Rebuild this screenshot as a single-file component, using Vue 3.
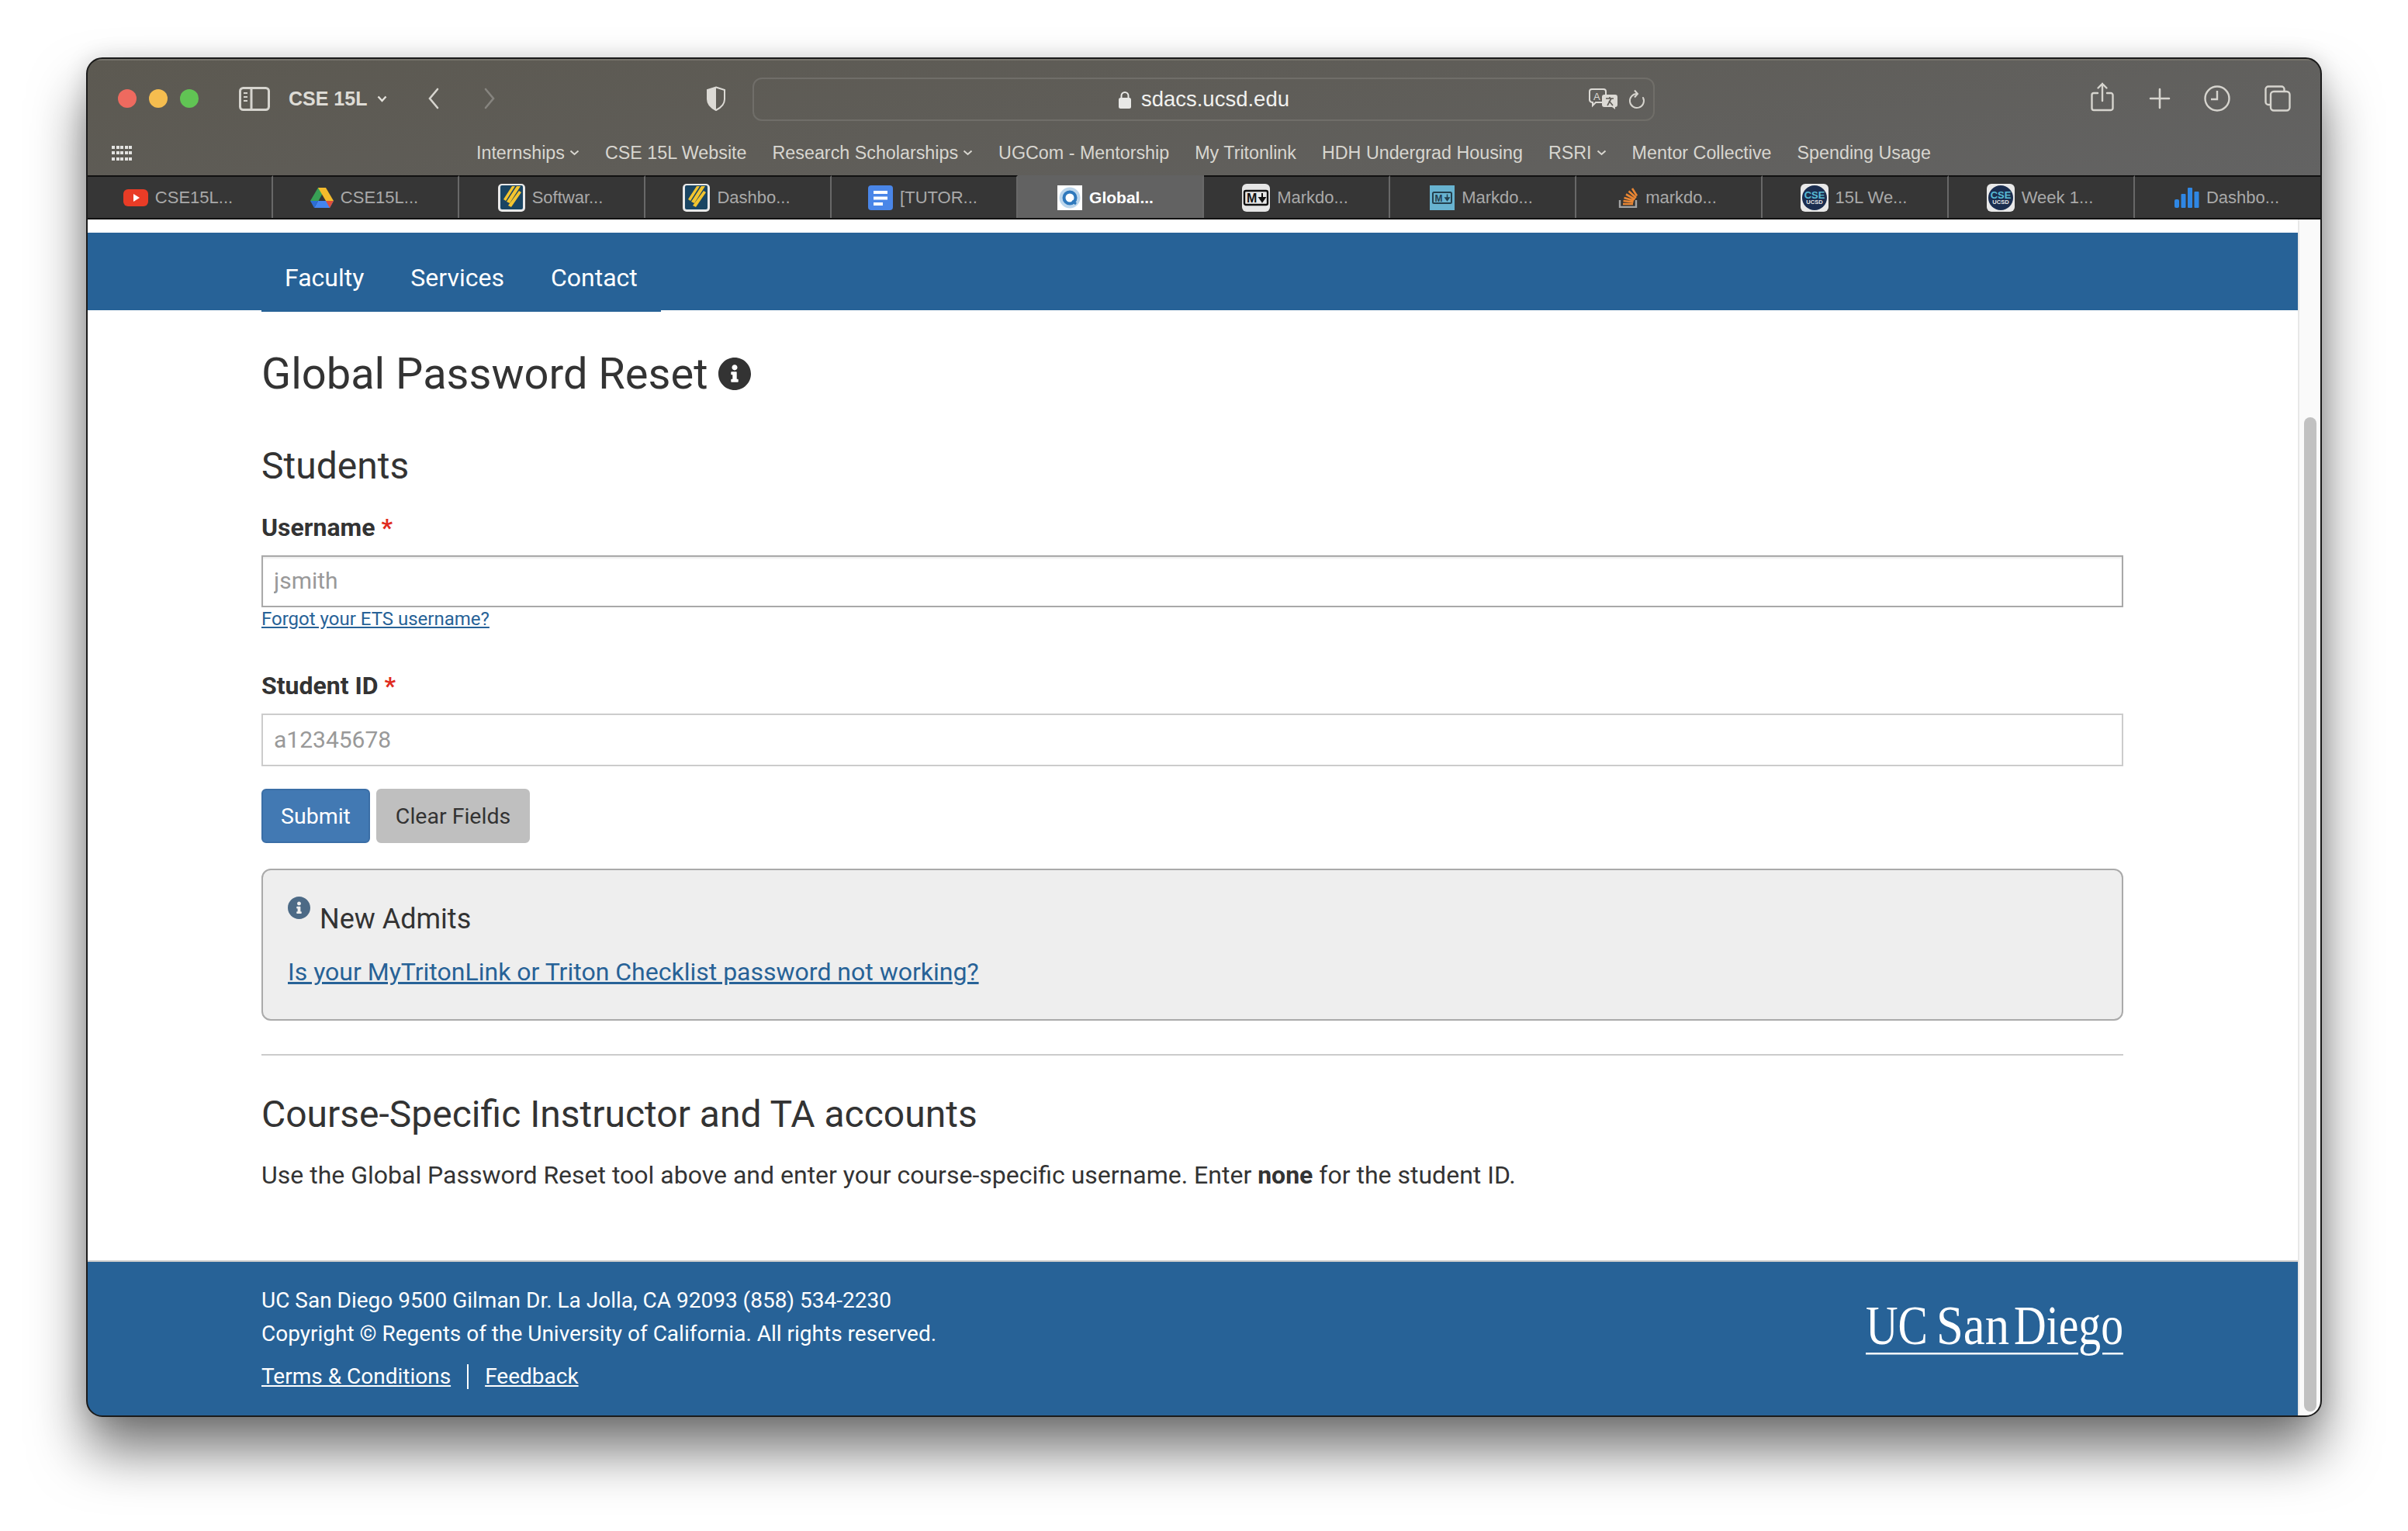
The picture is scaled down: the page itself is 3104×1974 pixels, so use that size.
<template>
  <div class="desk">
    <div class="window">
      <header class="chrome">
        <div class="toolbar">
          <span class="dot dot--red"></span>
          <span class="dot dot--yellow"></span>
          <span class="dot dot--green"></span>
          <svg class="ic-sidebar" width="40" height="31" viewBox="0 0 40 31" fill="none" stroke="#d6d4ce" stroke-width="3">
            <rect x="1.5" y="1.5" width="37" height="28" rx="4" />
            <path d="M16 2v27" />
            <path d="M6 8h5M6 13h5M6 18h5" stroke-width="2" />
          </svg>
          <span class="group-name">CSE 15L</span>
          <svg class="ic-chevron" width="13" height="9" viewBox="0 0 13 9" fill="none" stroke="#e4e2dc" stroke-width="2.4">
            <path d="M1.5 1.5l5 5.5 5-5.5" />
          </svg>
          <svg class="ic-back" width="14" height="28" viewBox="0 0 14 28" fill="none" stroke="#d6d4ce" stroke-width="2.6" stroke-linecap="round">
            <path d="M12 2L2 14l10 12" />
          </svg>
          <svg class="ic-forward" width="14" height="28" viewBox="0 0 14 28" fill="none" stroke="#86847f" stroke-width="2.6" stroke-linecap="round">
            <path d="M2 2l10 12L2 26" />
          </svg>
          <svg class="ic-shield" width="24" height="32" viewBox="0 0 24 32">
            <path d="M12 1.5L23 5v12c0 7-5 11-11 14C6 28 1 24 1 17V5z" fill="none" stroke="#dcdad5" stroke-width="2" />
            <path d="M12 1.5L1 5v12c0 7 5 11 11 14z" fill="#dcdad5" />
          </svg>
          <div class="urlbar">
            <span></span>
            <div class="url">
              <svg width="16" height="23" viewBox="0 0 16 23">
                <path d="M3.5 10V6.5a4.5 4.5 0 0 1 9 0V10" fill="none" stroke="#e8e8e6" stroke-width="2" />
                <rect x="0" y="9" width="16" height="14" rx="2.5" fill="#e8e8e6" />
              </svg>
              <span>sdacs.ucsd.edu</span>
            </div>
            <div class="url-tools">
              <svg width="38" height="28" viewBox="0 0 38 28">
                <path d="M4 1h15a3 3 0 0 1 3 3v11a3 3 0 0 1-3 3H9l-4 4v-4a4 4 0 0 1-4-3V4a3 3 0 0 1 3-3z" fill="none" stroke="#dcdad5" stroke-width="2" />
                <text x="6" y="15" class="tr-a">A</text>
                <path d="M20 8h14a3 3 0 0 1 3 3v10a3 3 0 0 1-3 3v3l-4-3H20a3 3 0 0 1-3-3V11a3 3 0 0 1 3-3z" fill="#dcdad5" />
                <path d="M22 13h10M27 11v2M24 22l5-9M31 22l-5-6" stroke="#5d5b56" stroke-width="1.6" fill="none" />
              </svg>
              <svg width="22" height="28" viewBox="0 0 22 28" fill="none" stroke="#d6d4ce" stroke-width="2">
                <path d="M19 12A9 9 0 1 1 11 7" stroke-linecap="round" />
                <path d="M8 2.500L12 7l-4 4.500" />
              </svg>
            </div>
          </div>
          <svg class="ic-share" width="30" height="38" viewBox="0 0 30 38" fill="none" stroke="#d6d4ce" stroke-width="2.4" stroke-linecap="round">
            <path d="M9 14H4a2.500 2.500 0 0 0-2.500 2.500v17A2.500 2.500 0 0 0 4 36h22a2.500 2.500 0 0 0 2.500-2.500v-17A2.500 2.500 0 0 0 26 14h-5" />
            <path d="M15 24V2M9.500 7.500L15 2l5.500 5.500" />
          </svg>
          <svg class="ic-plus" width="28" height="28" viewBox="0 0 28 28" stroke="#d6d4ce" stroke-width="2.6" stroke-linecap="round">
            <path d="M14 2v24M2 14h24" />
          </svg>
          <svg class="ic-clock" width="34" height="34" viewBox="0 0 34 34" fill="none" stroke="#d6d4ce" stroke-width="2.400">
            <circle cx="17" cy="17" r="15.500" />
            <path d="M17 7v11H9" />
          </svg>
          <svg class="ic-tabs" width="34" height="34" viewBox="0 0 34 34" fill="none" stroke="#d6d4ce" stroke-width="2.400">
            <path d="M8 25H5a3.500 3.500 0 0 1-3.500-3.500V5A3.500 3.500 0 0 1 5 1.500h17A3.500 3.500 0 0 1 25.500 5v3" />
            <rect x="8" y="8" width="24.500" height="24.500" rx="4" />
          </svg>
        </div>

        <div class="bookmarks">
          <div class="apps">
            <i v-for="n in 15" :key="n"></i>
          </div>
          <span v-for="item in bookmarks" :key="item.label" class="bookmark">
            {{ item.label }}
            <svg v-if="item.menu" width="13" height="8" viewBox="0 0 13 8" fill="none" stroke="#d8d6d0" stroke-width="2">
              <path d="M1.500 1.500L6.500 6l5-4.500" />
            </svg>
          </span>
        </div>
      </header>

      <div class="tabbar">
        <div v-for="(tab, index) in tabs" :key="index" class="tab" :class="{ 'tab--active': tab.active }">
          <svg v-if="tab.icon === 'yt'" width="32" height="22" viewBox="0 0 32 22">
            <rect width="32" height="22" rx="6" fill="#e93c26" />
            <path d="M13 6l8 5-8 5z" fill="#fff" />
          </svg>
          <svg v-else-if="tab.icon === 'drive'" width="30" height="26" viewBox="0 0 30 26">
            <path d="M10 0h10L10.500 17H0z" fill="#38a055" />
            <path d="M10 0h10l10 17H20z" fill="#f4bb2c" />
            <path d="M5 26L10 17h20l-5 9z" fill="#4385f0" />
            <path d="M25 26l-5-9h10z" fill="#dd4f3c" />
            <path d="M5 26l-5-9h10z" fill="#2c6ed6" />
          </svg>
          <svg v-else-if="tab.icon === 'bars'" width="35" height="36" viewBox="0 0 35 36">
            <rect width="35" height="36" rx="5" fill="#e9e9e9" />
            <rect x="3" y="2" width="29" height="31" rx="2" fill="#1a4563" />
            <path d="M24 3h5L15 25l-4-2zM18 3h4L10 22l-3-2zM27 9l3 2-13 19-4-2z" fill="#f3c52f" />
          </svg>
          <svg v-else-if="tab.icon === 'docs'" width="32" height="32" viewBox="0 0 32 32">
            <rect width="32" height="32" rx="4" fill="#4a86e8" />
            <path d="M7 7h18v4H7zM7 14.500h18v4H7zM7 22h12v4H7z" fill="#fff" />
          </svg>
          <svg v-else-if="tab.icon === 'ring'" width="32" height="32" viewBox="0 0 32 32">
            <rect width="32" height="32" fill="#fff" />
            <circle cx="16" cy="16" r="11" fill="none" stroke="#bcd6ec" stroke-width="5" />
            <circle cx="16" cy="16" r="7.500" fill="none" stroke="#2f79bd" stroke-width="4" />
            <path d="M19 20l5 4" stroke="#2f79bd" stroke-width="3" />
          </svg>
          <svg v-else-if="tab.icon === 'md'" width="36" height="36" viewBox="0 0 36 36">
            <rect width="36" height="36" rx="6" fill="#e6e6e6" />
            <rect x="3" y="9" width="30" height="18" rx="2" fill="none" stroke="#111" stroke-width="2.400" />
            <text x="6" y="24" class="md-m">M</text>
            <path d="M26 12v9M22.500 18l3.500 5 3.500-5z" stroke="#111" stroke-width="2" fill="#111" />
          </svg>
          <svg v-else-if="tab.icon === 'md2'" width="32" height="32" viewBox="0 0 32 32">
            <rect width="32" height="32" fill="#68b3d0" />
            <rect x="4" y="9" width="24" height="14" rx="1.500" fill="none" stroke="#24404e" stroke-width="2" />
            <text x="6.500" y="20.500" class="md-m md-m--small">M</text>
            <path d="M22.500 11.500v6M20 16l2.500 3.500L25 16z" stroke="#24404e" stroke-width="1.500" fill="#24404e" />
          </svg>
          <svg v-else-if="tab.icon === 'so'" width="26" height="26" viewBox="0 0 26 26">
            <path d="M2 16v9h21v-9" fill="none" stroke="#a4a4a4" stroke-width="2.400" />
            <path d="M6 21h13M6.500 17l13 1.500M7.500 13l12.500 3.500M10 8.500l11.500 6.500M13.500 4.500l9.500 8.500M18 1l6 9.500" fill="none" stroke="#ea8633" stroke-width="2.600" />
          </svg>
          <svg v-else-if="tab.icon === 'cse'" width="36" height="36" viewBox="0 0 36 36">
            <rect width="36" height="36" rx="6" fill="#e9e9e9" />
            <circle cx="18" cy="18" r="16" fill="#1b2e50" />
            <text x="18" y="18.500" class="cse-top">CSE</text>
            <text x="18" y="26" class="cse-bot">UCSD</text>
          </svg>
          <svg v-else-if="tab.icon === 'chart'" width="32" height="26" viewBox="0 0 32 26">
            <rect x="0" y="15" width="6" height="11" rx="2" fill="#2f87e4" />
            <rect x="8.500" y="8" width="6" height="18" rx="1" fill="#2f87e4" />
            <rect x="17" y="0" width="6" height="26" rx="1" fill="#2f87e4" />
            <rect x="25.500" y="5" width="6" height="21" rx="1" fill="#2f87e4" />
          </svg>
          <span>{{ tab.label }}</span>
        </div>
      </div>

      <div class="viewport">
        <main class="page">
          <nav class="navbar">
            <ul class="nav-list">
              <li>Faculty</li>
              <li>Services</li>
              <li>Contact</li>
            </ul>
          </nav>

          <div class="content">
            <h1 class="title">
              Global Password Reset
              <svg width="42" height="42" viewBox="8 8 496 496">
                <path :d="infoPath" fill="#333" />
              </svg>
            </h1>
            <h2 class="subtitle">Students</h2>

            <label class="label">Username <em>*</em></label>
            <input class="field field--active" type="text" placeholder="jsmith" />
            <a class="hint">Forgot your ETS username?</a>

            <label class="label label--second">Student ID <em>*</em></label>
            <input class="field" type="text" placeholder="a12345678" />

            <div class="actions">
              <button type="button" class="btn btn--primary">Submit</button>
              <button type="button" class="btn btn--muted">Clear Fields</button>
            </div>

            <section class="notice">
              <div class="notice__head">
                <svg width="29" height="29" viewBox="8 8 496 496">
                  <path :d="infoPath" fill="#4c6a86" />
                </svg>
                <span>New Admits</span>
              </div>
              <a class="notice__link">Is your MyTritonLink or Triton Checklist password not working?</a>
            </section>

            <hr class="rule" />

            <h2 class="subtitle subtitle--course">Course-Specific Instructor and TA accounts</h2>
            <p class="body-text">Use the Global Password Reset tool above and enter your course-specific username. Enter <b>none</b> for the student ID.</p>
          </div>

          <footer class="footer">
            <div class="footer__text">
              <div>UC San Diego 9500 Gilman Dr. La Jolla, CA 92093 (858) 534-2230</div>
              <div>Copyright © Regents of the University of California. All rights reserved.</div>
              <div class="footer__links">
                <a>Terms &amp; Conditions</a>
                <i></i>
                <a>Feedback</a>
              </div>
            </div>
            <svg class="logo" width="332" height="66" viewBox="0 0 332 66">
              <rect x="0" y="58" width="274" height="2.500" fill="#fff" />
              <rect x="305" y="58" width="27" height="2.500" fill="#fff" />
              <text x="0" y="47" textLength="80" lengthAdjust="spacingAndGlyphs">UC</text>
              <text x="91" y="47" textLength="94" lengthAdjust="spacingAndGlyphs">San</text>
              <text x="191" y="47" textLength="141" lengthAdjust="spacingAndGlyphs">Diego</text>
            </svg>
          </footer>
        </main>

        <aside class="scrollbar">
          <div class="scrollbar__thumb"></div>
        </aside>
      </div>
    </div>
  </div>
</template>

<script setup>
const infoPath = 'M256 8C119.043 8 8 119.083 8 256c0 136.997 111.043 248 248 248s248-111.003 248-248C504 119.083 392.957 8 256 8zm0 110c23.196 0 42 18.804 42 42s-18.804 42-42 42-42-18.804-42-42 18.804-42 42-42zm56 254c0 6.627-5.373 12-12 12h-88c-6.627 0-12-5.373-12-12v-24c0-6.627 5.373-12 12-12h12v-64h-12c-6.627 0-12-5.373-12-12v-24c0-6.627 5.373-12 12-12h64c6.627 0 12 5.373 12 12v100h12c6.627 0 12 5.373 12 12v24z'

const bookmarks = [
  { label: 'Internships', menu: true },
  { label: 'CSE 15L Website' },
  { label: 'Research Scholarships', menu: true },
  { label: 'UGCom - Mentorship' },
  { label: 'My Tritonlink' },
  { label: 'HDH Undergrad Housing' },
  { label: 'RSRI', menu: true },
  { label: 'Mentor Collective' },
  { label: 'Spending Usage' }
]

const tabs = [
  { icon: 'yt', label: 'CSE15L...' },
  { icon: 'drive', label: 'CSE15L...' },
  { icon: 'bars', label: 'Softwar...' },
  { icon: 'bars', label: 'Dashbo...' },
  { icon: 'docs', label: '[TUTOR...' },
  { icon: 'ring', label: 'Global...', active: true },
  { icon: 'md', label: 'Markdo...' },
  { icon: 'md2', label: 'Markdo...' },
  { icon: 'so', label: 'markdo...' },
  { icon: 'cse', label: '15L We...' },
  { icon: 'cse', label: 'Week 1...' },
  { icon: 'chart', label: 'Dashbo...' }
]
</script>

<style>
html,
body {
  margin: 0;
  background: #fff;
}
</style>

<style scoped>
.desk {
  box-sizing: border-box;
  height: 1974px;
  padding: 75px 112px 0;
  overflow: hidden;
}

.window {
  box-sizing: border-box;
  display: flex;
  flex-direction: column;
  width: 2880px;
  height: 1751px;
  border-radius: 20px;
  overflow: hidden;
  outline: 2px solid #1a1a1a;
  outline-offset: -1px;
  box-shadow: 0 44px 70px rgba(0, 0, 0, 0.55), 0 0 30px rgba(0, 0, 0, 0.14);
  font-family: Roboto, sans-serif;
  color: #333;
}

.chrome {
  height: 151px;
  flex: none;
  background: linear-gradient(172deg, #5c5951 0%, #5f5d58 45%, #636363 100%);
  box-shadow: inset 0 3px 0 #77746c;
  font-family: "Liberation Sans", sans-serif;
  color: #d8d6d0;
}

.toolbar {
  display: flex;
  align-items: center;
  height: 104px;
  padding-left: 40px;
}

.dot {
  width: 24px;
  height: 24px;
  border-radius: 50%;
  margin-right: 16px;
}

.dot--red { background: #ee6a5f; }
.dot--yellow { background: #f5bd4f; }
.dot--green { background: #61c454; margin-right: 0; }

.ic-sidebar { margin-left: 52px; }

.group-name {
  margin-left: 24px;
  font-size: 25px;
  font-weight: 700;
  color: #dedcd6;
}

.ic-chevron { margin-left: 13px; }
.ic-back { margin-left: 53px; }
.ic-forward { margin-left: 58px; }
.ic-shield { margin-left: 273px; }

.urlbar {
  display: grid;
  grid-template-columns: 1fr auto 1fr;
  align-items: center;
  box-sizing: border-box;
  width: 1163px;
  height: 56px;
  margin-left: 35px;
  margin-top: 2px;
  border: 2px solid #706e69;
  border-radius: 12px;
}

.url {
  display: flex;
  align-items: center;
  gap: 13px;
  font-size: 27.500px;
  color: #f1f1ef;
}

.url-tools {
  display: flex;
  align-items: center;
  justify-content: flex-end;
  gap: 13px;
  padding-right: 10px;
}

.tr-a {
  font: 13px "Liberation Sans", sans-serif;
  fill: #dcdad5;
}

.ic-share { margin-left: 562px; margin-top: -4px; }
.ic-plus { margin-left: 45px; }
.ic-clock { margin-left: 43px; }
.ic-tabs { margin-left: 44px; }

.bookmarks {
  display: flex;
  align-items: center;
  height: 36px;
  padding-left: 32px;
  gap: 33px;
  font-size: 23.300px;
  white-space: nowrap;
}

.apps {
  display: grid;
  grid-template-columns: repeat(5, 3.600px);
  gap: 3.500px 2px;
  margin-right: 411px;
}

.apps i {
  width: 4px;
  height: 4px;
  background: #e2e2e0;
}

.bookmark {
  display: flex;
  align-items: center;
  gap: 6px;
}

.tabbar {
  display: flex;
  height: 57px;
  flex: none;
  background: #363636;
  border-bottom: 2px solid #111;
  box-sizing: border-box;
  font-family: "Liberation Sans", sans-serif;
  font-size: 22px;
  color: #a9a9a9;
}

.tab {
  box-sizing: border-box;
  flex: 0 0 240px;
  display: flex;
  align-items: center;
  justify-content: center;
  gap: 9px;
  padding-right: 3px;
  border-top: 2px solid #111;
  border-right: 2px solid #686868;
}

.tab:last-child { border-right: 0; }

.tab--active {
  background: #626262;
  border-top-color: #626262;
  color: #fff;
  font-size: 21px;
  font-weight: 700;
  padding-right: 12px;
}

.md-m {
  font: 700 16px "Liberation Sans", sans-serif;
  fill: #111;
}

.md-m--small {
  font-size: 12px;
  fill: #24404e;
}

.cse-top {
  font: 700 13px "Liberation Sans", sans-serif;
  fill: #58bcd6;
  text-anchor: middle;
}

.cse-bot {
  font: 700 7.500px "Liberation Sans", sans-serif;
  fill: #e9e9e9;
  text-anchor: middle;
}

.viewport {
  display: flex;
  flex: 1;
  min-height: 0;
}

.page {
  display: flex;
  flex-direction: column;
  flex: 1;
  min-width: 0;
  padding-top: 17px;
  background: #fff;
}

.navbar {
  height: 100px;
  flex: none;
  padding: 0 225px;
  background: #276297;
}

.nav-list {
  display: inline-flex;
  align-items: center;
  box-sizing: border-box;
  height: 102px;
  margin: 0;
  padding: 14px 0 0;
  list-style: none;
  background: #276297;
  color: #fff;
  font-size: 32px;
}

.nav-list li {
  padding: 0 30px;
}

.content {
  display: flex;
  flex-direction: column;
  align-items: flex-start;
  padding: 0 225px;
}

.title {
  display: flex;
  align-items: center;
  gap: 14px;
  height: 64px;
  margin: 50px 0 0;
  font-size: 56px;
  font-weight: 400;
}

.subtitle {
  height: 56px;
  margin: 59px 0 0;
  font-size: 48px;
  line-height: 56px;
  font-weight: 400;
}

.subtitle--course {
  margin-top: 48px;
}

.label {
  height: 40px;
  margin-top: 31px;
  font-size: 32px;
  line-height: 40px;
  font-weight: 700;
}

.label em {
  color: #e02b20;
  font-style: normal;
}

.label--second {
  margin-top: 51px;
}

.field {
  box-sizing: border-box;
  width: 100%;
  height: 68px;
  margin-top: 16px;
  padding: 0 14px 2px;
  border: 2px solid #ccc;
  background: #fff;
  font: 30px Roboto, sans-serif;
  outline: 0;
}

.field--active {
  height: 67px;
  border-color: #a9a9a9;
  box-shadow: inset 0 2px 2px rgba(0, 0, 0, 0.08);
}

.field::placeholder {
  color: #999;
  opacity: 1;
}

.hint {
  height: 30px;
  font-size: 24px;
  line-height: 30px;
  color: #276297;
  text-decoration: underline;
}

.actions {
  display: flex;
  gap: 8px;
  margin-top: 29px;
}

.btn {
  box-sizing: border-box;
  height: 70px;
  padding: 0;
  border: 2px solid transparent;
  border-radius: 6px;
  font: 28.500px Roboto, sans-serif;
  white-space: nowrap;
}

.btn--primary {
  width: 140px;
  background: #4279b3;
  border-color: #3a6ea6;
  color: #fff;
}

.btn--muted {
  width: 198px;
  background: #bfbfbf;
  border-color: #bfbfbf;
  color: #333;
}

.notice {
  box-sizing: border-box;
  align-self: stretch;
  height: 196px;
  margin-top: 33px;
  padding: 34px 32px 0;
  background: #eee;
  border: 2px solid #aaa;
  border-radius: 12px;
}

.notice__head {
  display: flex;
  align-items: flex-start;
  gap: 12px;
  height: 56px;
  font-size: 36px;
}

.notice__head span {
  margin-top: 8px;
}

.notice__link {
  display: block;
  margin-top: 19px;
  font-size: 32px;
  line-height: 44px;
  color: #276297;
  text-decoration: underline;
}

.rule {
  align-self: stretch;
  height: 2px;
  margin: 43px 0 0;
  border: 0;
  background: #ccc;
}

.body-text {
  margin: 28px 0 0;
  font-size: 32px;
  line-height: 44px;
}

.footer {
  display: flex;
  align-items: center;
  justify-content: space-between;
  box-sizing: border-box;
  height: 201px;
  margin-top: auto;
  padding: 0 225px 2px;
  background: #276297;
  border-top: 2px solid #ccc;
  color: #fff;
  font-size: 28px;
  line-height: 43px;
}

.footer__links {
  display: flex;
  align-items: center;
  gap: 21px;
  margin-top: 12px;
}

.footer__links a {
  text-decoration: underline;
}

.footer__links i {
  width: 2px;
  height: 32px;
  background: #fff;
}

.logo {
  margin-top: -13px;
  overflow: visible;
}

.logo text {
  font: 71px "Liberation Serif", serif;
  fill: #fff;
}

.scrollbar {
  box-sizing: border-box;
  width: 30px;
  flex: none;
  padding: 255px 6px 6px 6px;
  background: #fafafa;
  border-left: 2px solid #e8e8e8;
}

.scrollbar__thumb {
  height: 100%;
  border-radius: 8px;
  background: #c1c1c1;
}
</style>
